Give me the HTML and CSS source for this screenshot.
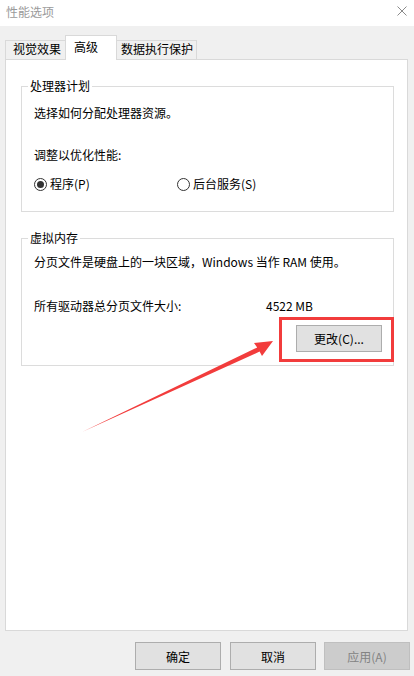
FILE: index.html
```html
<!DOCTYPE html>
<html lang="zh-CN">
<head>
<meta charset="utf-8">
<title>性能选项</title>
<link rel="stylesheet" href="styles.css">
</head>
<body>
<div class="titlebar">
  <span class="title">性能选项</span>
  <svg class="close" width="10" height="10" viewBox="0 0 10 10"><path d="M0.5 0.5 L9.5 9.5 M9.5 0.5 L0.5 9.5" stroke="#8a8a8a" stroke-width="1" fill="none"/></svg>
</div>
<div class="tabs">
  <div class="tab tab-visual">视觉效果</div>
  <div class="tab tab-active">高级</div>
  <div class="tab tab-dep">数据执行保护</div>
</div>
<div class="panel">
  <fieldset class="group group-cpu">
    <legend>处理器计划</legend>
    <p class="line">选择如何分配处理器资源。</p>
    <p class="line line-adjust">调整以优化性能:</p>
    <div class="radios">
      <label class="radio"><span class="dot checked"></span>程序(P)</label>
      <label class="radio"><span class="dot"></span>后台服务(S)</label>
    </div>
  </fieldset>
  <fieldset class="group group-mem">
    <legend>虚拟内存</legend>
    <p class="line">分页文件是硬盘上的一块区域，Windows 当作 RAM 使用。</p>
    <div class="line size-row"><span>所有驱动器总分页文件大小:</span><span>4522 MB</span></div>
    <div class="btn-row">
      <span class="btn-wrap"><button class="btn">更改(C)...</button><span class="highlight"></span></span>
    </div>
  </fieldset>
</div>
<div class="footer">
  <button class="btn">确定</button>
  <button class="btn">取消</button>
  <button class="btn btn-disabled">应用(A)</button>
</div>
<svg class="arrow" width="414" height="676" viewBox="0 0 414 676">
  <polygon points="82,432 257.2,347.4 254,343 273,341 262,356 259.6,351.6" fill="#f23c3c"/>
</svg>
</body>
</html>
```
FILE: styles.css
```css
* { box-sizing: border-box; }
html, body { margin: 0; padding: 0; }
body {
  width: 414px;
  height: 676px;
  background: #f0f0f0;
  font-family: "Noto Sans CJK SC", "Microsoft YaHei", sans-serif;
  font-size: 12px;
  color: #000;
  position: relative;
  overflow: hidden;
}
.titlebar {
  height: 26px;
  background: #fff;
  display: flex;
  align-items: center;
  justify-content: space-between;
  padding: 0 6px 2px 6px;
}
.title { color: #9a9a9a; line-height: 16px; }
.close { margin-top: -3px; margin-right: 1px; }
.tabs {
  display: flex;
  align-items: flex-end;
  padding: 9px 0 0 5px;
}
.tab {
  border: 1px solid #d9d9d9;
  border-bottom: none;
  background: #f0f0f0;
  line-height: 16px;
  height: 19px;
  padding-top: 0;
  text-align: center;
}
.tab-visual { width: 61px; padding-left: 3px; }
.tab-active {
  width: 52px;
  margin-left: -1px;
  height: 25px;
  margin-bottom: -1px;
  padding-top: 3px;
  padding-left: 8px;
  text-align: left;
  background: #fff;
  position: relative;
  z-index: 1;
}
.tab-dep { width: 81px; margin-left: -1px; padding-left: 1px; }
.panel {
  margin: 0 6px 0 5px;
  height: 572px;
  background: #fff;
  border: 1px solid #d9d9d9;
  padding: 18px 13px 0 15px;
}
.group {
  margin: 0;
  border: 1px solid #dcdcdc;
  padding: 11px 11px 19px 12px;
  min-width: 0;
}
.group legend {
  padding: 0 2px;
  margin-left: -6px;
  line-height: 16px;
}
.group-mem { margin-top: 18px; padding-top: 8px; padding-bottom: 13px; }
.line { margin: 0; line-height: 16px; white-space: nowrap; }
.line-adjust { margin-top: 26px; }
.radios {
  margin-top: 13px;
  display: grid;
  grid-template-columns: 143px auto;
  line-height: 16px;
}
.radio { display: flex; align-items: center; }
.dot {
  width: 13px;
  height: 13px;
  border: 1px solid #333;
  border-radius: 50%;
  margin-right: 3px;
  display: flex;
  align-items: center;
  justify-content: center;
}
.dot.checked::after {
  content: "";
  width: 7px;
  height: 7px;
  border-radius: 50%;
  background: #333;
}
.size-row {
  margin-top: 28px;
  display: grid;
  grid-template-columns: 232px auto;
}
.btn-row {
  margin-top: 11px;
  display: flex;
  justify-content: flex-end;
}
.btn-wrap { position: relative; display: block; }
.btn {
  width: 86px;
  height: 27px;
  background: #e1e1e1;
  border: 1px solid #adadad;
  font: inherit;
  color: #000;
  padding: 0;
  margin: 0;
  display: block;
}
.highlight {
  position: absolute;
  left: -17px;
  right: -12px;
  top: -8px;
  bottom: -10px;
  border: 3px solid #f23c3c;
}
.footer {
  margin-top: 11px;
  display: flex;
  justify-content: flex-end;
  gap: 9px;
  padding-right: 4px;
}
.footer .btn { height: 28px; }
.footer .btn-disabled {
  margin-left: -1px;
  background: #cccccc;
  border-color: #bfbfbf;
  color: #838383;
}
.arrow { position: absolute; left: 0; top: 0; pointer-events: none; }
```
